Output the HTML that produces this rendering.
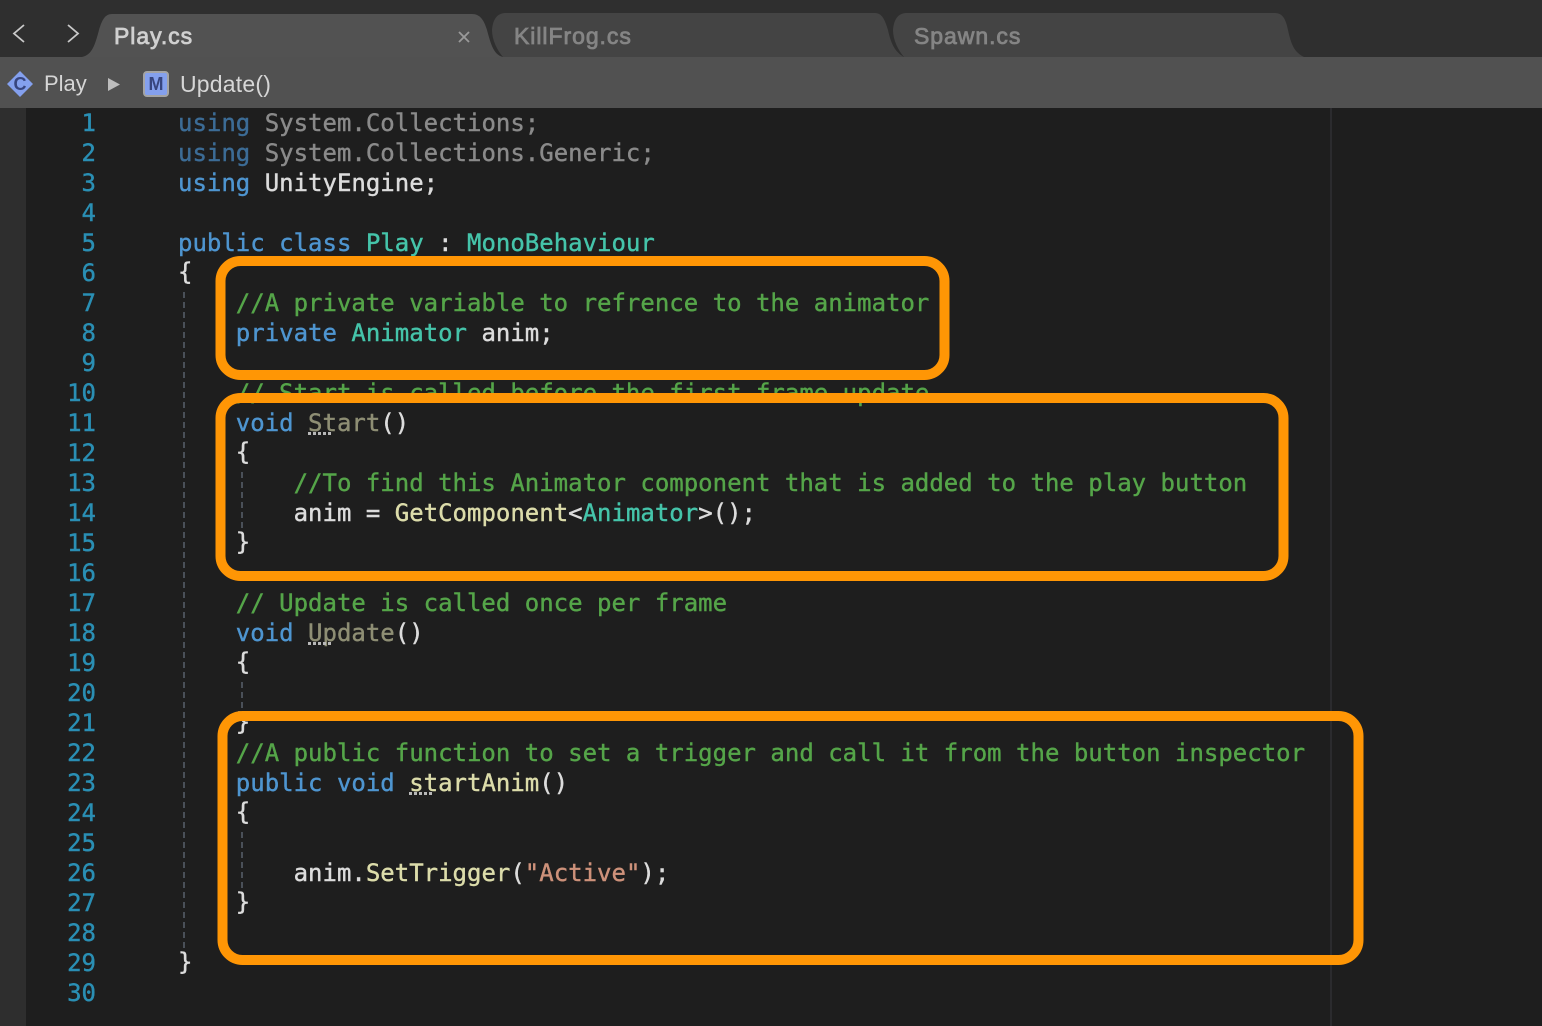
<!DOCTYPE html>
<html><head><meta charset="utf-8"><style>
html,body{margin:0;padding:0;width:1542px;height:1026px;overflow:hidden;background:#1e1e1e}
#root{position:relative;width:1542px;height:1026px;overflow:hidden}
pre{margin:0;position:absolute;font:24px/30px "DejaVu Sans Mono",monospace;white-space:pre;-webkit-text-stroke:.4px}
#code{left:178px;top:108px;color:#dcdcdc}
#nums{left:0;top:108px;width:96px;text-align:right;color:#2a8fb4}
.k{color:#4e95d0}.t{color:#45c4aa}.c{color:#55a549}.f{color:#dcdcaa}.s{color:#cd917a}
.dk{color:#3c6c96}.dw{color:#8a8a8a}.du{color:#8e8e74}
.b{position:relative;top:-1px}
.u{position:absolute;height:3px;background:repeating-linear-gradient(90deg,#b8b8b8 0 3px,transparent 3px 5px)}
.ui{position:absolute;font-family:"Liberation Sans",sans-serif;white-space:nowrap}
.tab{font-size:23px;letter-spacing:.95px;-webkit-text-stroke:.8px}
svg{position:absolute;left:0;top:0}
</style></head><body><div id="root">
<div style="position:absolute;left:0;top:0;width:1542px;height:57px;background:#2f2f2f"></div>
<div style="position:absolute;left:0;top:57px;width:1542px;height:51px;background:#515151"></div>
<div style="position:absolute;left:0;top:108px;width:26px;height:918px;background:#2e2e2e"></div>
<div style="position:absolute;left:1330px;top:108px;width:2px;height:918px;background:#2b2b2e"></div>

<svg width="1542" height="1026" viewBox="0 0 1542 1026">
<path d="M904 57C898 50 893 40 893 30C894 18 899 13 907 13H1275C1283 13 1286 20 1288 30C1291 44 1294 52 1304 57Z" fill="#444"/>
<path d="M503 57C497 50 492 40 492 30C493 18 498 13 506 13H875C882 13 885 20 888 30C891 44 895 52 904 57Z" fill="#444"/>
<path d="M82 57C92 55 95 45 99 30C102 20 105 14 112 14H472C480 14 484 20 487 30C491 45 494 55 503 57Z" fill="#525252"/>
<path d="M24 25L14 33.500L24 42" fill="none" stroke="#c9c9c9" stroke-width="1.8"/>
<path d="M68 25L78 33.500L68 42" fill="none" stroke="#c9c9c9" stroke-width="1.8"/>
<path d="M459 32L469 42M469 32L459 42" stroke="#9a9a9a" stroke-width="1.8"/>
<path d="M20 71L33 84L20 97L7 84Z" fill="#84a0ee"/>
<path d="M108 78L120 84.500L108 91Z" fill="#bdbdbd"/>
<rect x="144" y="72" width="24" height="24" rx="3" fill="#84a0ee" stroke="#a4a4a4" stroke-width="2"/>
<g stroke="#4a5058" stroke-width="2" stroke-dasharray="6 4">
<path d="M184 292V948"/>
<path d="M242 472V530"/>
<path d="M242 682V714"/>
<path d="M242 832V892"/>
</g>
</svg>

<div class="ui tab" style="left:114px;top:23px;color:#d0d0d0">Play.cs</div>
<div class="ui tab" style="left:514px;top:23px;color:#858585">KillFrog.cs</div>
<div class="ui tab" style="left:914px;top:23px;color:#858585">Spawn.cs</div>
<div class="ui" style="left:44px;top:71px;font-size:22px;color:#d6d6d6">Play</div>
<div class="ui" style="left:180px;top:71px;font-size:23px;color:#d6d6d6;letter-spacing:.2px">Update()</div>
<div class="ui" style="left:12px;top:74px;width:16px;text-align:center;font-size:18px;font-weight:bold;color:#37457f">C</div>
<div class="ui" style="left:147px;top:74px;width:18px;text-align:center;font-size:18px;font-weight:bold;color:#37457f">M</div>

<pre id="nums">1
2
3
4
5
6
7
8
9
10
11
12
13
14
15
16
17
18
19
20
21
22
23
24
25
26
27
28
29
30</pre>
<pre id="code"><span class="dk">using</span> <span class="dw">System.Collections;</span>
<span class="dk">using</span> <span class="dw">System.Collections.Generic;</span>
<span class="k">using</span> UnityEngine;

<span class="k">public class</span> <span class="t">Play</span> : <span class="t">MonoBehaviour</span>
<span class="b">{</span>
    <span class="c">//A private variable to refrence to the animator</span>
    <span class="k">private</span> <span class="t">Animator</span> anim;

    <span class="c">// Start is called before the first frame update</span>
    <span class="k">void</span> <span class="du">Start</span>()
    <span class="b">{</span>
        <span class="c">//To find this Animator component that is added to the play button</span>
        anim = <span class="f">GetComponent</span>&lt;<span class="t">Animator</span>&gt;();
    <span class="b">}</span>

    <span class="c">// Update is called once per frame</span>
    <span class="k">void</span> <span class="du">Update</span>()
    <span class="b">{</span>

    <span class="b">}</span>
    <span class="c">//A public function to set a trigger and call it from the button inspector</span>
    <span class="k">public void</span> <span class="f">startAnim</span>()
    <span class="b">{</span>

        anim.<span class="f">SetTrigger</span>(<span class="s">"Active"</span>);
    <span class="b">}</span>

<span class="b">}</span>
</pre>
<div class="u" style="left:308px;top:432px;width:25px"></div>
<div class="u" style="left:308px;top:642px;width:25px"></div>
<div class="u" style="left:409px;top:792px;width:25px"></div>

<svg width="1542" height="1026" viewBox="0 0 1542 1026" fill="none" stroke="#ff9605" stroke-width="10">
<rect x="220.500" y="261" width="724" height="114" rx="20"/>
<rect x="220.500" y="398" width="1063" height="178" rx="20"/>
<rect x="222.500" y="716" width="1136" height="244" rx="20"/>
</svg>
</div></body></html>
